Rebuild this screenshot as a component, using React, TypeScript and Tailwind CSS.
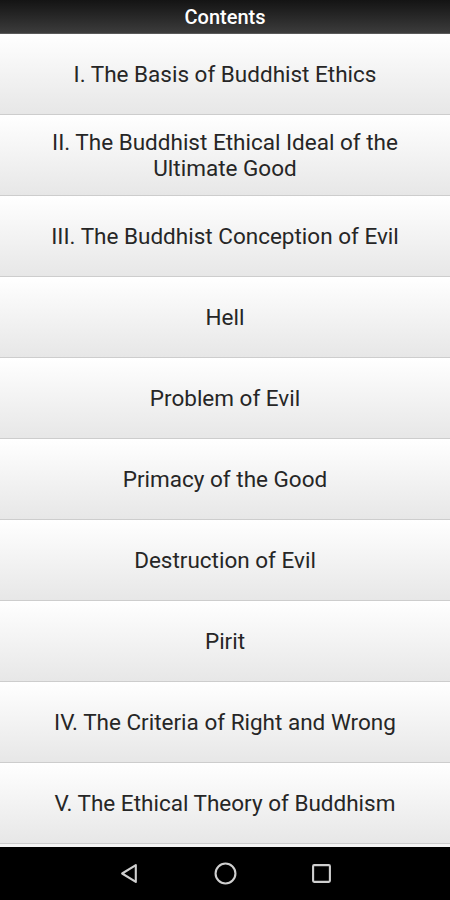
const CHAPTERS = [
  'I. The Basis of Buddhist Ethics',
  'II. The Buddhist Ethical Ideal of the Ultimate Good',
  'III. The Buddhist Conception of Evil',
  'Hell',
  'Problem of Evil',
  'Primacy of the Good',
  'Destruction of Evil',
  'Pirit',
  'IV. The Criteria of Right and Wrong',
  'V. The Ethical Theory of Buddhism',
]

export default function App() {
  return (
    <div className="flex h-[900px] w-[450px] flex-col overflow-hidden bg-[#f4f4f4] font-['Roboto',sans-serif]">
      <header className="flex h-[34px] shrink-0 items-center justify-center border-b border-[#5a5a5a] bg-gradient-to-b from-[#141414] to-[#3c3c3c]">
        <h1 className="text-[20px] font-medium text-white">Contents</h1>
      </header>

      <ul className="flex-1">
        {CHAPTERS.map((title) => (
          <li
            key={title}
            className="flex h-[81px] items-center justify-center border-b border-[#cdcdcd] bg-gradient-to-b from-white to-[#e7e7e7] px-12 text-center text-[22.5px] leading-[26px] text-[#262626]"
          >
            {title}
          </li>
        ))}
      </ul>

      {/* android nav bar */}
      <nav className="flex h-[53px] shrink-0 items-center justify-center gap-[74px] bg-black text-[#cfcfcf]">
        <svg width="21" height="21" viewBox="0 0 20 20" fill="none" stroke="currentColor" strokeWidth="2" strokeLinejoin="round">
          <path d="M16 2 L3 10 L16 18 Z" />
        </svg>
        <svg width="23" height="23" viewBox="0 0 22 22" fill="none" stroke="currentColor" strokeWidth="2">
          <circle cx="11" cy="11" r="9.5" />
        </svg>
        <svg width="21" height="21" viewBox="0 0 20 20" fill="none" stroke="currentColor" strokeWidth="2">
          <rect x="2" y="2" width="16" height="16" rx="1" />
        </svg>
      </nav>
    </div>
  )
}
